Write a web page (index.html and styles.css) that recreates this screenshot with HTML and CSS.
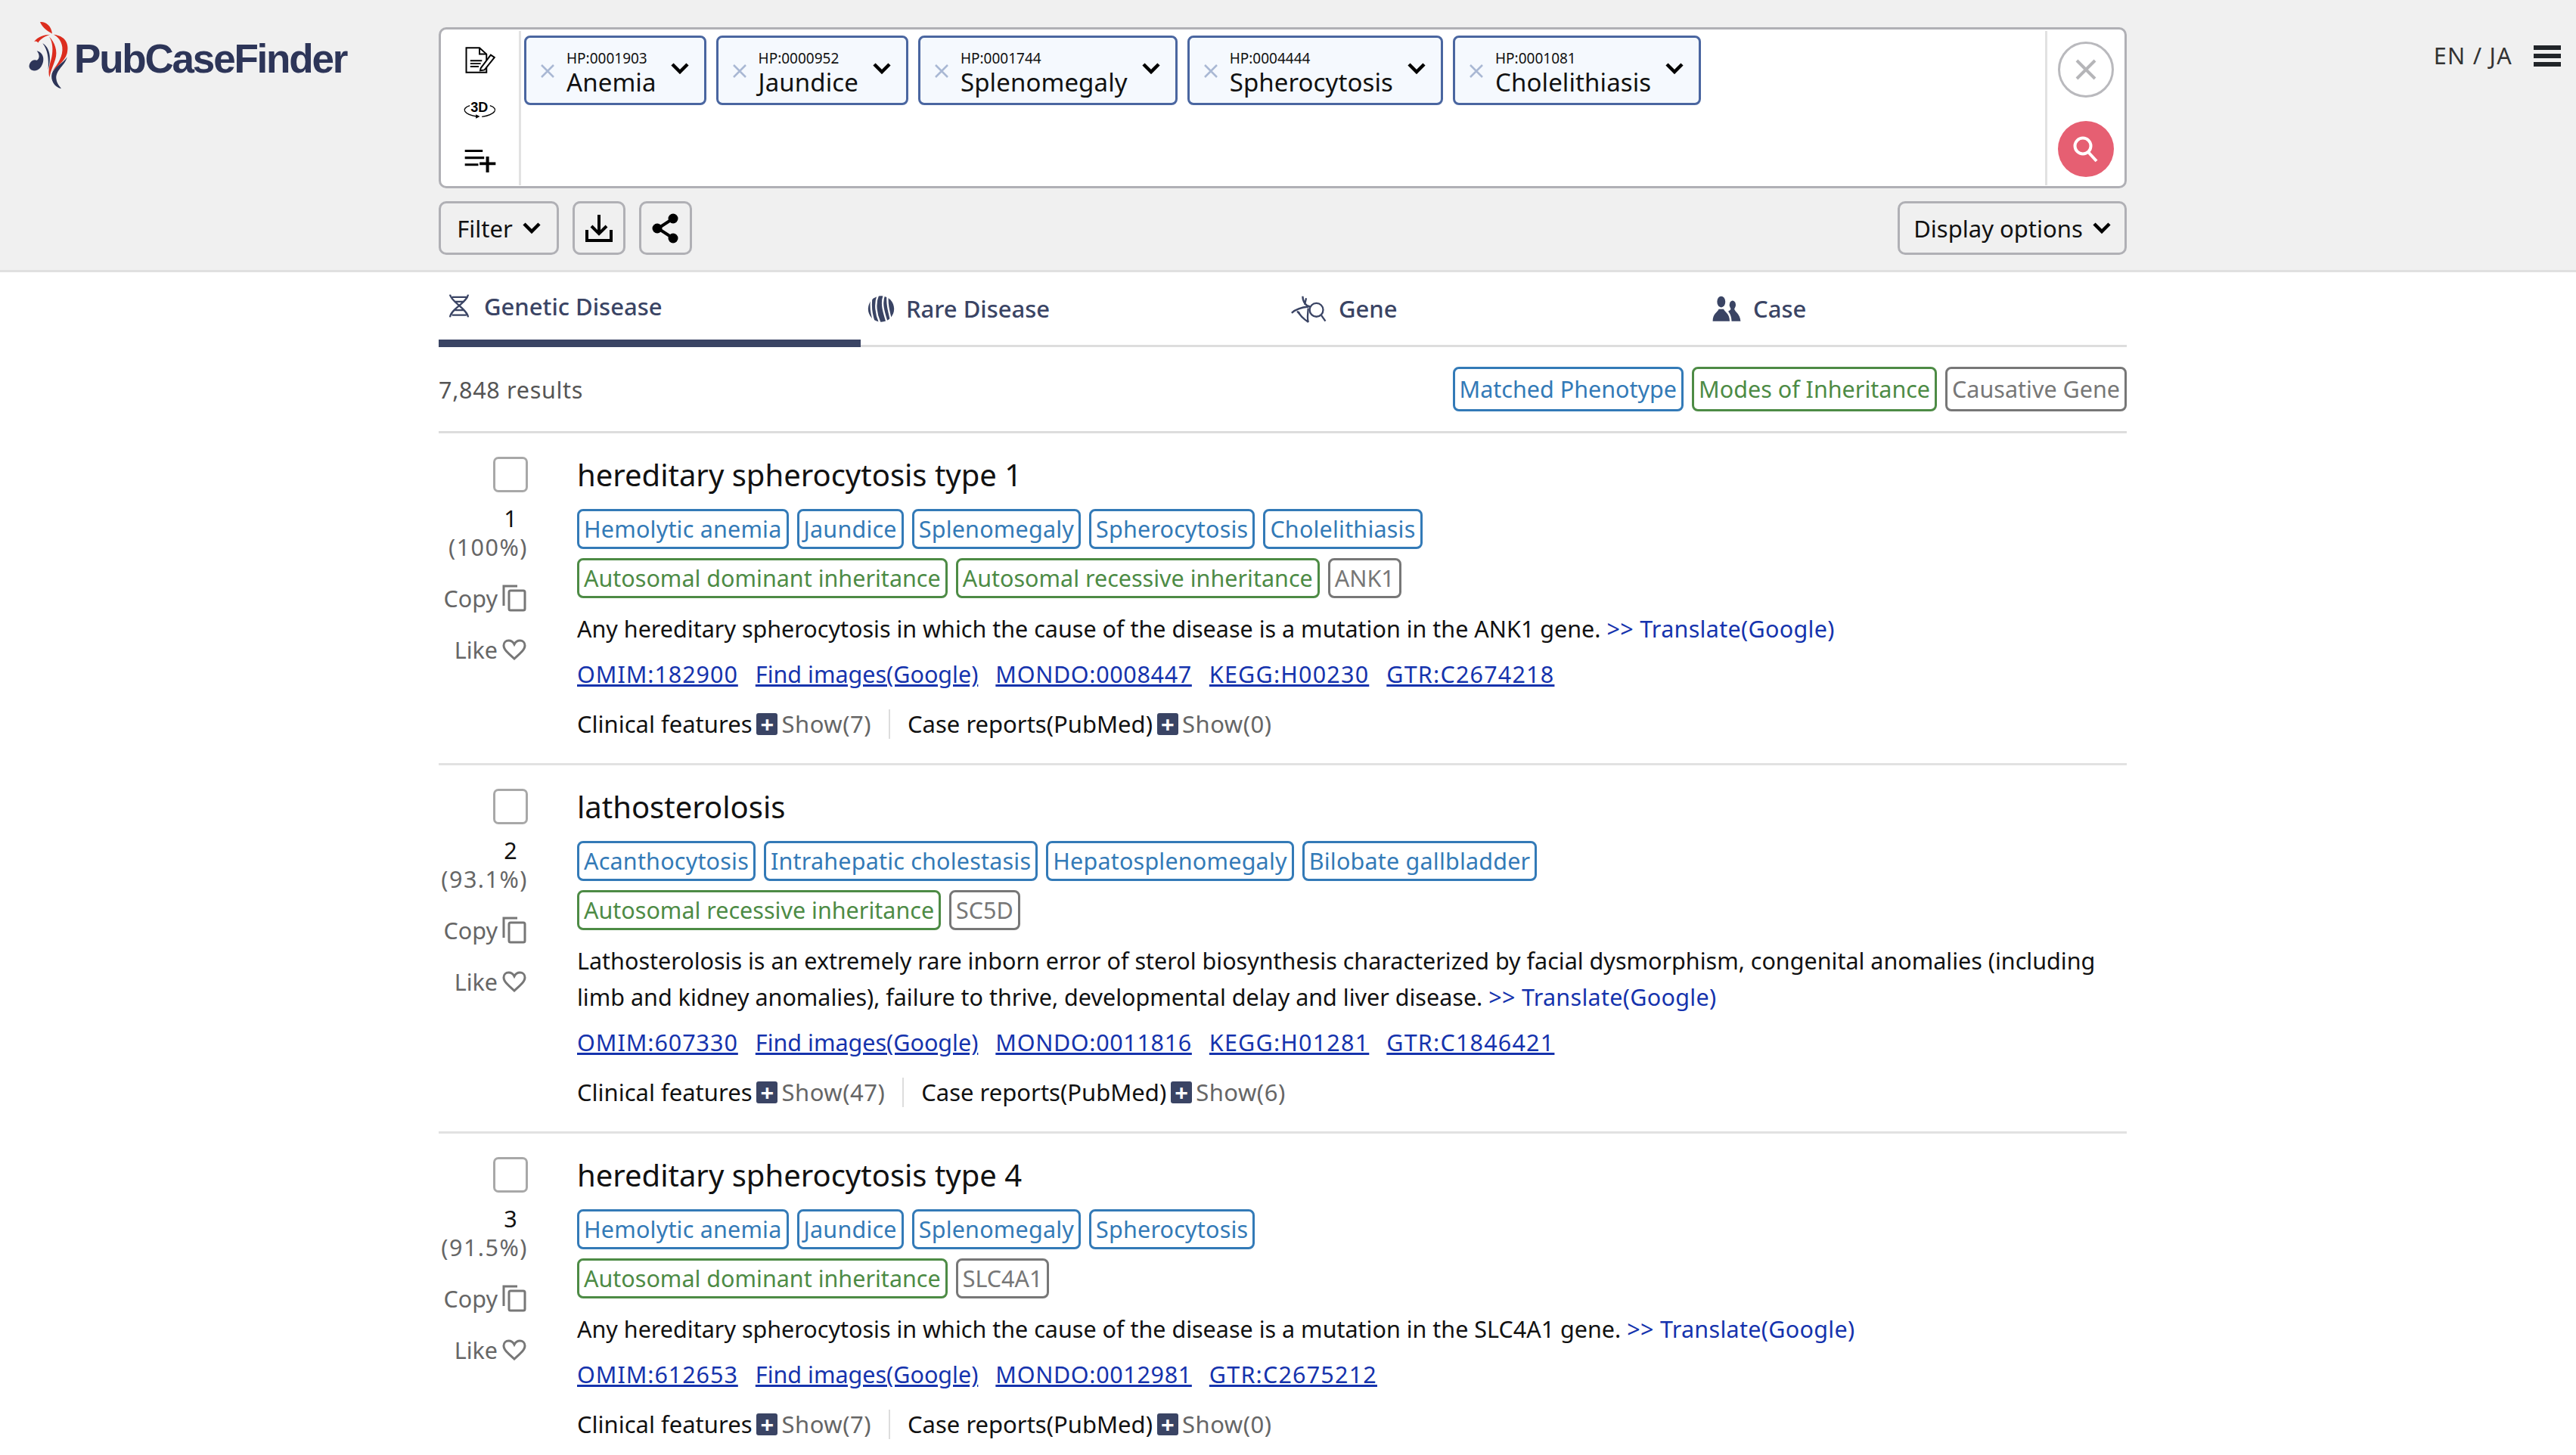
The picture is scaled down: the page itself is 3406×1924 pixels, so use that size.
FILE: index.html
```html
<!DOCTYPE html>
<html lang="en">
<head>
    <meta charset="UTF-8">
    <meta name="viewport" content="width=device-width, initial-scale=1.0">
    <title>PubCaseFinder</title>
    <link rel="stylesheet" href="styles.css">
</head>
<body>
    <header class="top">
        <div class="logo">
            <svg class="logo-mark" viewBox="20 20 165 275">
                <g fill="#dc2d1e">
                    <path d="M68 26C90 24 112 40 116 72C100 62 78 50 68 26Z"/>
                    <path d="M44 104C60 84 84 76 108 76C90 82 70 92 60 108C56 102 50 100 44 104Z"/>
                    <path d="M122 76C165 80 185 110 175 150C165 185 130 205 115 222C140 190 160 160 156 125C152 100 140 86 122 76Z"/>
                    <path d="M104 84C125 105 140 140 128 175C122 195 110 220 105 245C98 215 108 190 114 165C120 135 118 105 104 84Z"/>
                </g>
                <g fill="#2d3558">
                    <path d="M55 140C80 145 90 175 72 203C60 222 30 225 25 205C22 188 40 170 55 178C66 172 68 155 55 140Z"/>
                    <path d="M78 110C105 125 115 165 100 215C103 170 98 135 78 110Z"/>
                    <path d="M175 165C170 195 130 215 132 250C134 270 145 280 152 290C125 285 108 255 115 230C122 205 160 190 175 165Z"/>
                </g>
            </svg>
            <span class="logo-text">PubCaseFinder</span>
        </div>

        <div class="search">
            <div class="search-box">
                <div class="tools">
                    <svg class="tool-note" viewBox="38 33 120 106">
                        <path d="M42 37H95L123 62V135H42Z" fill="none" stroke="#000" stroke-width="6"/>
                        <path d="M95 37V62H123M58 88H105M58 100H100M58 112H92" fill="none" stroke="#000" stroke-width="6"/>
                        <path d="M100 118L140 65L155 75L115 125L98 128Z" fill="#fff" stroke="#000" stroke-width="6"/>
                    </svg>
                    <svg class="tool-3d" viewBox="30 250 140 72">
                        <text x="98" y="295" text-anchor="middle">3D</text>
                        <path d="M60 270C22 282 38 306 88 313M140 270C178 282 160 306 108 314" fill="none" stroke="#000" stroke-width="4"/>
                        <path d="M84 305L100 313L84 321Z"/>
                    </svg>
                    <svg class="tool-list" viewBox="40 440 125 95">
                        <path d="M42 443H112V452H42ZM42 470H118V479H42ZM42 497H95V506H42ZM100 492H125V470H137V492H163V503H137V532H125V503H100Z"/>
                    </svg>
                </div>

                <div class="tags">
                    <div class="tag">
                        <svg class="tag-x" viewBox="0 0 18 18"><path d="M1 1L17 17M17 1L1 17"/></svg>
                        <div class="tag-text"><span class="tag-id">HP:0001903</span><span class="tag-name">Anemia</span></div>
                        <svg class="chev tag-chev" viewBox="0 0 24 15"><path d="M2 2L12 12L22 2"/></svg>
                    </div>
                    <div class="tag">
                        <svg class="tag-x" viewBox="0 0 18 18"><path d="M1 1L17 17M17 1L1 17"/></svg>
                        <div class="tag-text"><span class="tag-id">HP:0000952</span><span class="tag-name">Jaundice</span></div>
                        <svg class="chev tag-chev" viewBox="0 0 24 15"><path d="M2 2L12 12L22 2"/></svg>
                    </div>
                    <div class="tag">
                        <svg class="tag-x" viewBox="0 0 18 18"><path d="M1 1L17 17M17 1L1 17"/></svg>
                        <div class="tag-text"><span class="tag-id">HP:0001744</span><span class="tag-name">Splenomegaly</span></div>
                        <svg class="chev tag-chev" viewBox="0 0 24 15"><path d="M2 2L12 12L22 2"/></svg>
                    </div>
                    <div class="tag">
                        <svg class="tag-x" viewBox="0 0 18 18"><path d="M1 1L17 17M17 1L1 17"/></svg>
                        <div class="tag-text"><span class="tag-id">HP:0004444</span><span class="tag-name">Spherocytosis</span></div>
                        <svg class="chev tag-chev" viewBox="0 0 24 15"><path d="M2 2L12 12L22 2"/></svg>
                    </div>
                    <div class="tag">
                        <svg class="tag-x" viewBox="0 0 18 18"><path d="M1 1L17 17M17 1L1 17"/></svg>
                        <div class="tag-text"><span class="tag-id">HP:0001081</span><span class="tag-name">Cholelithiasis</span></div>
                        <svg class="chev tag-chev" viewBox="0 0 24 15"><path d="M2 2L12 12L22 2"/></svg>
                    </div>
                </div>

                <div class="actions">
                    <button class="round-btn clear-btn">
                        <svg viewBox="0 0 28 28"><path d="M2 2L26 26M26 2L2 26"/></svg>
                    </button>
                    <button class="round-btn go-btn">
                        <svg viewBox="0 0 36 36"><circle cx="14" cy="14" r="10.5"/><path d="M21 22L32 34"/></svg>
                    </button>
                </div>
            </div>

            <div class="toolbar">
                <button class="tool-btn filter-btn">Filter<svg class="chev" viewBox="0 0 24 15"><path d="M2 2L12 12L22 2"/></svg></button>
                <button class="tool-btn icon-btn">
                    <svg class="ico-download" viewBox="0 0 36 36"><path d="M18 0V24M8 15L18 25L28 15M2 20V34H34V20"/></svg>
                </button>
                <button class="tool-btn icon-btn">
                    <svg class="ico-share" viewBox="0 0 36 40"><path d="M28 7L8 20L28 33"/><circle cx="28" cy="7" r="6.5"/><circle cx="7" cy="20" r="6.5"/><circle cx="28" cy="33" r="6.5"/></svg>
                </button>
                <button class="tool-btn display-btn">Display options<svg class="chev" viewBox="0 0 24 15"><path d="M2 2L12 12L22 2"/></svg></button>
            </div>
        </div>

        <div class="lang">
            <span>EN / JA</span>
            <div class="burger"><i></i><i></i><i></i></div>
        </div>
    </header>

    <main class="content">
        <nav class="tabs">
            <a class="tab active">
                <svg class="tab-dna" viewBox="36 33 88 100">
                    <path d="M42 38C45 65 110 95 115 128M115 38C110 70 45 95 42 128M50 48H108M62 66H100M62 100H100M50 120H108" fill="none" stroke="#3a4464" stroke-width="7"/>
                </svg>
                Genetic Disease
            </a>
            <a class="tab">
                <svg class="tab-rare" viewBox="35 30 106 104">
                    <circle cx="88" cy="82" r="51" fill="#3a4464"/>
                    <path d="M52 28C44 70 48 100 62 138M76 28C62 60 68 105 84 138M100 28C86 60 100 100 112 138M114 28C110 60 118 90 128 130" fill="none" stroke="#fff" stroke-width="7"/>
                </svg>
                Rare Disease
            </a>
            <a class="tab">
                <svg class="tab-gene" viewBox="30 20 150 115">
                    <g fill="none" stroke="#3a4464" stroke-width="7">
                        <circle cx="137" cy="83" r="27"/>
                        <path d="M157 105L173 128M82 28C82 50 95 68 112 70M96 36L90 62M38 95C60 75 85 72 105 70M65 90C72 108 90 122 105 132M60 88L80 112M104 76C104 95 98 118 105 132"/>
                    </g>
                </svg>
                Gene
            </a>
            <a class="tab">
                <svg class="tab-case" viewBox="30 25 125 110">
                    <g fill="#3a4464">
                        <ellipse cx="70" cy="52" rx="17" ry="23"/>
                        <path d="M35 132C35 100 55 95 60 82H80C85 95 105 100 105 132Z"/>
                        <ellipse cx="117" cy="65" rx="13" ry="18"/>
                        <path d="M113 132C112 112 106 100 99 92C106 88 109 84 110 80H124C126 95 148 100 150 132Z"/>
                    </g>
                </svg>
                Case
            </a>
        </nav>

        <div class="summary">
            <span class="count">7,848 results</span>
            <div class="chips">
                <span class="chip blue">Matched Phenotype</span>
                <span class="chip green">Modes of Inheritance</span>
                <span class="chip grey">Causative Gene</span>
            </div>
        </div>

        <article class="result">
            <div class="side">
                <span class="check"></span>
                <span class="rank">1</span>
                <span class="score">(100%)</span>
                <span class="side-link copy">Copy<svg viewBox="0 0 32 36"><path d="M2 28V2H20"/><rect x="9" y="8" width="21" height="26" rx="2"/></svg></span>
                <span class="side-link like">Like<svg viewBox="0 0 32 28"><path d="M16 26C8 19 2 14 2 8.500C2 4.500 5 2 8.500 2C11.500 2 14.500 4 16 7C17.500 4 20.500 2 23.500 2C27 2 30 4.500 30 8.500C30 14 24 19 16 26Z"/></svg></span>
            </div>
            <div class="detail">
                <h2 class="title">hereditary spherocytosis type 1</h2>
                <div class="chips">
                    <span class="chip blue">Hemolytic anemia</span>
                    <span class="chip blue">Jaundice</span>
                    <span class="chip blue">Splenomegaly</span>
                    <span class="chip blue">Spherocytosis</span>
                    <span class="chip blue">Cholelithiasis</span>
                </div>
                <div class="chips">
                    <span class="chip green">Autosomal dominant inheritance</span>
                    <span class="chip green">Autosomal recessive inheritance</span>
                    <span class="chip grey">ANK1</span>
                </div>
                <p class="desc">Any hereditary spherocytosis in which the cause of the disease is a mutation in the ANK1 gene. <a class="translate">&gt;&gt; Translate(Google)</a></p>
                <div class="links">
                    <a class="id">OMIM:182900</a><a>Find images(Google)</a><a class="id mondo">MONDO:0008447</a><a class="id wide">KEGG:H00230</a><a class="id wide">GTR:C2674218</a>
                </div>
                <div class="extra">
                    <div class="extra-item">Clinical features<i class="plus">+</i><span class="show">Show(7)</span></div>
                    <div class="extra-item">Case reports(PubMed)<i class="plus">+</i><span class="show">Show(0)</span></div>
                </div>
            </div>
        </article>

        <article class="result">
            <div class="side">
                <span class="check"></span>
                <span class="rank">2</span>
                <span class="score">(93.1%)</span>
                <span class="side-link copy">Copy<svg viewBox="0 0 32 36"><path d="M2 28V2H20"/><rect x="9" y="8" width="21" height="26" rx="2"/></svg></span>
                <span class="side-link like">Like<svg viewBox="0 0 32 28"><path d="M16 26C8 19 2 14 2 8.500C2 4.500 5 2 8.500 2C11.500 2 14.500 4 16 7C17.500 4 20.500 2 23.500 2C27 2 30 4.500 30 8.500C30 14 24 19 16 26Z"/></svg></span>
            </div>
            <div class="detail">
                <h2 class="title">lathosterolosis</h2>
                <div class="chips">
                    <span class="chip blue">Acanthocytosis</span>
                    <span class="chip blue">Intrahepatic cholestasis</span>
                    <span class="chip blue">Hepatosplenomegaly</span>
                    <span class="chip blue">Bilobate gallbladder</span>
                </div>
                <div class="chips">
                    <span class="chip green">Autosomal recessive inheritance</span>
                    <span class="chip grey">SC5D</span>
                </div>
                <p class="desc">Lathosterolosis is an extremely rare inborn error of sterol biosynthesis characterized by facial dysmorphism, congenital anomalies (including limb and kidney anomalies), failure to thrive, developmental delay and liver disease. <a class="translate">&gt;&gt; Translate(Google)</a></p>
                <div class="links">
                    <a class="id">OMIM:607330</a><a>Find images(Google)</a><a class="id mondo">MONDO:0011816</a><a class="id wide">KEGG:H01281</a><a class="id wide">GTR:C1846421</a>
                </div>
                <div class="extra">
                    <div class="extra-item">Clinical features<i class="plus">+</i><span class="show">Show(47)</span></div>
                    <div class="extra-item">Case reports(PubMed)<i class="plus">+</i><span class="show">Show(6)</span></div>
                </div>
            </div>
        </article>

        <article class="result">
            <div class="side">
                <span class="check"></span>
                <span class="rank">3</span>
                <span class="score">(91.5%)</span>
                <span class="side-link copy">Copy<svg viewBox="0 0 32 36"><path d="M2 28V2H20"/><rect x="9" y="8" width="21" height="26" rx="2"/></svg></span>
                <span class="side-link like">Like<svg viewBox="0 0 32 28"><path d="M16 26C8 19 2 14 2 8.500C2 4.500 5 2 8.500 2C11.500 2 14.500 4 16 7C17.500 4 20.500 2 23.500 2C27 2 30 4.500 30 8.500C30 14 24 19 16 26Z"/></svg></span>
            </div>
            <div class="detail">
                <h2 class="title">hereditary spherocytosis type 4</h2>
                <div class="chips">
                    <span class="chip blue">Hemolytic anemia</span>
                    <span class="chip blue">Jaundice</span>
                    <span class="chip blue">Splenomegaly</span>
                    <span class="chip blue">Spherocytosis</span>
                </div>
                <div class="chips">
                    <span class="chip green">Autosomal dominant inheritance</span>
                    <span class="chip grey">SLC4A1</span>
                </div>
                <p class="desc">Any hereditary spherocytosis in which the cause of the disease is a mutation in the SLC4A1 gene. <a class="translate">&gt;&gt; Translate(Google)</a></p>
                <div class="links">
                    <a class="id">OMIM:612653</a><a>Find images(Google)</a><a class="id mondo">MONDO:0012981</a><a class="id wide">GTR:C2675212</a>
                </div>
                <div class="extra">
                    <div class="extra-item">Clinical features<i class="plus">+</i><span class="show">Show(7)</span></div>
                    <div class="extra-item">Case reports(PubMed)<i class="plus">+</i><span class="show">Show(0)</span></div>
                </div>
            </div>
        </article>
    </main>
</body>
</html>
```

FILE: styles.css
```css
html {
    overflow: hidden;
}

body {
    margin: 0;
    height: 1924px;
    overflow: hidden;
    background-color: #fff;
    font-family: "Noto Sans", sans-serif;
    font-size: 30.5px;
    color: #111;
}

svg {
    display: block;
    flex: none;
}

/* header */

.top {
    display: flex;
    height: 357px;
    background-color: #f0f0f0;
    border-bottom: 3px solid #e0e0e0;
}

.logo {
    display: flex;
    align-items: flex-start;
    width: 580px;
    padding: 27px 0 0 37px;
    box-sizing: border-box;
}

.logo-mark {
    width: 55px;
    height: 92px;
}

.logo-text {
    margin: 21px 0 0 6px;
    font-family: "Liberation Sans", sans-serif;
    font-size: 53px;
    font-weight: bold;
    line-height: 60px;
    letter-spacing: -2.2px;
    color: #2d3558;
}

.search {
    width: 2232px;
    padding-top: 36px;
}

.search-box {
    display: flex;
    height: 213px;
    box-sizing: border-box;
    background-color: #fff;
    border: 3px solid #b0b0b5;
    border-radius: 10px;
}

.tools {
    display: flex;
    flex-direction: column;
    align-items: center;
    width: 106px;
    height: 204px;
    margin-top: 2px;
    padding-top: 21px;
    box-sizing: border-box;
    border-right: 3px solid #e2e2e2;
}

.tool-note {
    width: 40px;
    height: 35px;
}

.tool-3d {
    width: 47px;
    height: 24px;
    margin-top: 36px;
}

.tool-3d text {
    font-family: "Liberation Sans", sans-serif;
    font-size: 54px;
    font-weight: bold;
}

.tool-list {
    width: 42px;
    height: 32px;
    margin-top: 40px;
}

.tags {
    flex: 1;
    display: flex;
    align-items: flex-start;
    gap: 13px;
    padding: 8px 0 0 4px;
}

.tag {
    position: relative;
    display: flex;
    align-items: center;
    height: 92px;
    padding: 0 20px 0 53px;
    box-sizing: border-box;
    background-color: #f5f9fe;
    border: 3px solid #4a66a0;
    border-radius: 8px;
}

.tag-x {
    position: absolute;
    left: 19px;
    top: 35px;
    width: 18px;
    height: 18px;
    fill: none;
    stroke: #a9b8d4;
    stroke-width: 2.500;
}

.tag-text {
    display: flex;
    flex-direction: column;
    padding-top: 6px;
}

.tag-id {
    font-size: 19px;
    line-height: 26px;
}

.tag-name {
    font-size: 33px;
    line-height: 38px;
    letter-spacing: 0.1px;
}

.chev {
    fill: none;
    stroke: #000;
    stroke-width: 4.500;
}

.tag-chev {
    width: 24px;
    height: 15px;
    margin: -6px 0 0 19px;
}

.actions {
    display: flex;
    flex-direction: column;
    align-items: center;
    gap: 31px;
    width: 105px;
    height: 204px;
    margin-top: 2px;
    padding-top: 14px;
    box-sizing: border-box;
    border-left: 3px solid #e2e2e2;
}

.round-btn {
    display: flex;
    align-items: center;
    justify-content: center;
    width: 74px;
    height: 74px;
    padding: 0;
    border-radius: 50%;
}

.clear-btn {
    background-color: #fff;
    border: 3px solid #b9b9bd;
}

.clear-btn svg {
    width: 28px;
    height: 28px;
    fill: none;
    stroke: #b5b5b8;
    stroke-width: 4;
}

.go-btn {
    background-color: #e65f72;
    border: none;
}

.go-btn svg {
    width: 36px;
    height: 36px;
    fill: none;
    stroke: #fff;
    stroke-width: 4;
}

.toolbar {
    display: flex;
    gap: 18px;
    margin-top: 17px;
}

.tool-btn {
    display: flex;
    align-items: center;
    justify-content: center;
    height: 71px;
    padding: 0;
    box-sizing: border-box;
    background-color: transparent;
    border: 3px solid #b0b0b5;
    border-radius: 10px;
    font-family: inherit;
    font-size: 31px;
    color: #111;
}

.tool-btn .chev {
    width: 24px;
    height: 15px;
    margin-left: 13px;
}

.filter-btn {
    width: 159px;
}

.icon-btn {
    width: 70px;
}

.ico-download {
    width: 36px;
    height: 36px;
    fill: none;
    stroke: #000;
    stroke-width: 4;
}

.ico-share {
    width: 36px;
    height: 40px;
}

.ico-share path {
    fill: none;
    stroke: #000;
    stroke-width: 4;
}

.display-btn {
    width: 303px;
    margin-left: auto;
}

.lang {
    flex: 1;
    display: flex;
    align-items: flex-start;
    justify-content: flex-end;
    gap: 28px;
    padding: 52px 20px 0 0;
    line-height: 42px;
    letter-spacing: 1.3px;
    color: #333;
}

.burger {
    display: flex;
    flex-direction: column;
    gap: 5px;
    margin-top: 8px;
}

.burger i {
    display: block;
    width: 36px;
    height: 6px;
    background-color: #212529;
}

/* tabs */

.content {
    width: 2232px;
    margin-left: 580px;
}

.tabs {
    display: flex;
    height: 99px;
}

.tab {
    flex: 0 0 558px;
    display: flex;
    align-items: center;
    gap: 15px;
    padding-left: 9px;
    box-sizing: border-box;
    border-bottom: 3px solid #ddd;
    font-size: 31px;
    font-weight: 500;
    color: #3a4464;
}

.tab.active {
    gap: 18px;
    padding-left: 13px;
    border-bottom: 10px solid #3a4464;
}

.tab-dna {
    width: 29px;
    height: 33px;
}

.tab-rare {
    width: 36px;
    height: 35px;
}

.tab-gene {
    width: 50px;
    height: 38px;
}

.tab-case {
    width: 40px;
    height: 36px;
}

.summary {
    display: flex;
    align-items: center;
    justify-content: space-between;
    height: 111px;
    border-bottom: 3px solid #ddd;
}

.count {
    letter-spacing: 0.7px;
    color: #555;
}

/* chips */

.chips {
    display: flex;
    gap: 11px;
}

.chip {
    display: block;
    padding: 0 6px;
    border: 3px solid;
    border-radius: 8px;
    line-height: 47px;
}

.summary .chip {
    line-height: 53px;
}

.detail .chip.blue {
    letter-spacing: 0.2px;
}

.chip.blue {
    color: #337ab7;
    border-color: #337ab7;
}

.chip.green {
    color: #4d8b45;
    border-color: #4d8b45;
}

.chip.grey {
    color: #777;
    border-color: #777;
}

/* results */

.result {
    display: flex;
    gap: 65px;
    padding: 31px 0 28px;
    border-bottom: 3px solid #e2e2e2;
}

.side {
    display: flex;
    flex-direction: column;
    align-items: flex-end;
    width: 118px;
    flex: none;
    color: #666;
}

.check {
    width: 46px;
    height: 47px;
    box-sizing: border-box;
    background-color: #fff;
    border: 3px solid #a8a8a8;
    border-radius: 7px;
}

.rank {
    width: 46px;
    margin-top: 15px;
    text-align: center;
    line-height: 38px;
    color: #111;
}

.score {
    line-height: 38px;
    letter-spacing: 1.5px;
}

.side-link {
    display: flex;
    align-items: center;
    gap: 6px;
    height: 44px;
    padding-right: 2px;
}

.side-link svg {
    fill: none;
    stroke: #777;
    stroke-width: 3;
}

.copy {
    margin-top: 27px;
}

.copy svg {
    width: 32px;
    height: 36px;
}

.like {
    margin-top: 24px;
}

.like svg {
    width: 32px;
    height: 28px;
}

.detail {
    flex: 1;
}

.title {
    margin: 0 0 21px;
    font-size: 40px;
    font-weight: 400;
    line-height: 48px;
}

.detail .chips + .chips {
    margin-top: 12px;
}

.desc {
    margin: 16px 0 0;
    line-height: 48px;
}

.translate {
    letter-spacing: 0.3px;
    color: #1533ad;
}

.links {
    display: flex;
    gap: 23px;
    margin-top: 12px;
    line-height: 48px;
}

.links a {
    color: #1533ad;
    text-decoration: underline;
}

.links .id {
    letter-spacing: 0.95px;
}

.links .mondo {
    letter-spacing: 0.65px;
}

.links .wide {
    letter-spacing: 1.2px;
}

.extra {
    display: flex;
    margin-top: 18px;
    font-size: 31px;
    line-height: 48px;
}

.extra-item {
    display: flex;
    align-items: center;
}

.extra-item + .extra-item {
    margin-left: 23px;
    padding-left: 25px;
    background: linear-gradient(#ddd, #ddd) left center / 2px 39px no-repeat;
}

.plus {
    display: flex;
    align-items: center;
    justify-content: center;
    width: 28px;
    height: 29px;
    margin: 0 5px 0 6px;
    background-color: #3a4464;
    border-radius: 3px;
    font-style: normal;
    font-weight: bold;
    line-height: 1;
    color: #fff;
}

.show {
    letter-spacing: 0.5px;
    color: #666;
}
```
